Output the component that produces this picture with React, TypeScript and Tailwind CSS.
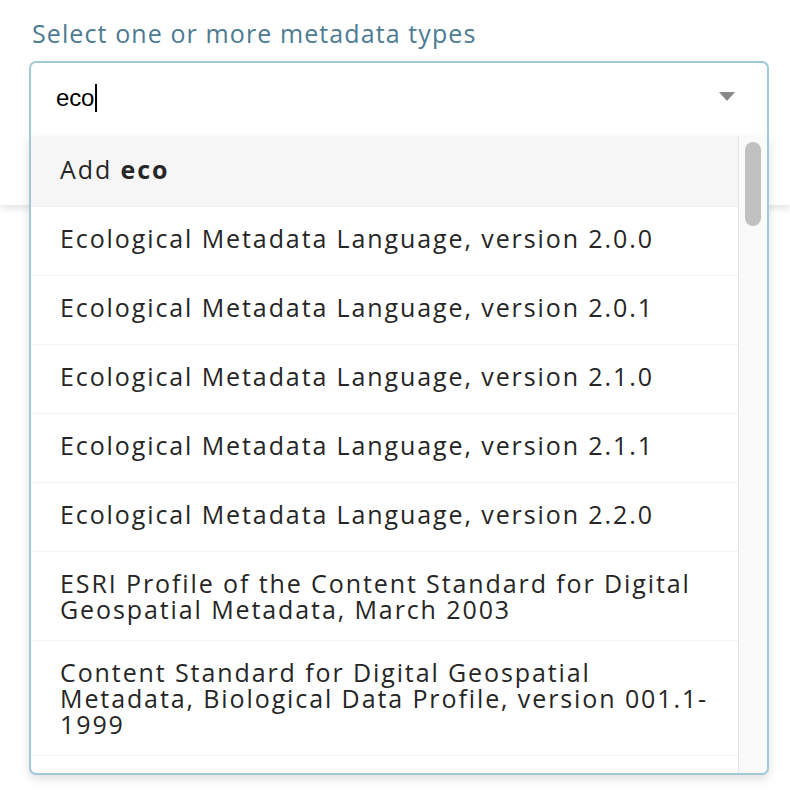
import React from 'react';

const options: { label: string; short: boolean }[] = [
  { label: 'Ecological Metadata Language, version 2.0.0', short: true },
  { label: 'Ecological Metadata Language, version 2.0.1', short: true },
  { label: 'Ecological Metadata Language, version 2.1.0', short: true },
  { label: 'Ecological Metadata Language, version 2.1.1', short: true },
  { label: 'Ecological Metadata Language, version 2.2.0', short: true },
  { label: 'ESRI Profile of the Content Standard for Digital Geospatial Metadata, March 2003', short: false },
  { label: 'Content Standard for Digital Geospatial Metadata, Biological Data Profile, version 001.1-1999', short: false },
  { label: 'Content Standard for Digital Geospatial Metadata, version 002', short: false },
];

const font = { fontFamily: '"Open Sans", "Noto Sans", sans-serif' };

export default function App() {
  return (
    <div className="relative w-[790px] h-[796px] bg-white overflow-hidden" style={font}>
      {/* page card behind the open menu */}
      <div className="h-[205px] bg-white shadow-[0_3px_8px_rgba(0,0,0,0.12)] pt-[17px]">
        <label className="block pl-[32px] text-[25px] leading-[32px] tracking-[1.1px] text-[#4c7b94]">
          Select one or more metadata types
        </label>
        <div className="mt-[12px] ml-[29px] w-[740px] h-[75px] border-2 border-b-0 border-[#a2c8dc] rounded-t-[7px] flex items-center pl-[25px] pr-[32px] pb-[4px]">
          <div className="flex-1 flex items-center">
            <span className="text-[24px] text-black tracking-[-0.2px]" style={{ fontFamily: '"Liberation Sans", Arial, sans-serif' }}>
              eco
            </span>
            <span className="ml-[1px] w-[2px] h-[28px] bg-black" />
          </div>
          <svg width="16" height="9" viewBox="0 0 16 9" className="mb-[2px]">
            <path d="M0 0 L16 0 L8 9 Z" fill="#888888" />
          </svg>
        </div>
      </div>

      {/* dropdown menu */}
      <div className="absolute top-[136px] left-[29px] w-[740px] h-[639px] bg-white border-2 border-t-0 border-[#a2c8dc] rounded-b-[7px] shadow-[0_4px_10px_rgba(0,0,0,0.12)] flex overflow-hidden">
        <div className="flex-1 flex flex-col text-[#262626] text-[25px] tracking-[1.9px] leading-[26px]">
          <div className="min-h-[71px] flex items-center pl-[29px] pr-[16px] pb-[4px] bg-[#f6f6f6] border-b border-[#f1f1f1]">
            <span>
              Add <b className="font-bold">eco</b>
            </span>
          </div>
          {options.map((o) => (
            <div
              key={o.label}
              className={
                o.short
                  ? 'min-h-[69px] flex items-center shrink-0 pl-[29px] pr-[16px] pt-[18px] pb-[24px] border-b border-[#f3f3f3]'
                  : 'min-h-[69px] flex items-center shrink-0 pl-[29px] pr-[16px] py-[18px] border-b border-[#f3f3f3]'
              }
            >
              {o.label}
            </div>
          ))}
        </div>
        <div className="w-[29px] shrink-0 bg-[#fafafa] border-l border-[#e6e6e6] pt-[6px] flex justify-center">
          <div className="w-[16px] h-[84px] rounded-full bg-[#c1c1c1]" />
        </div>
      </div>
    </div>
  );
}
